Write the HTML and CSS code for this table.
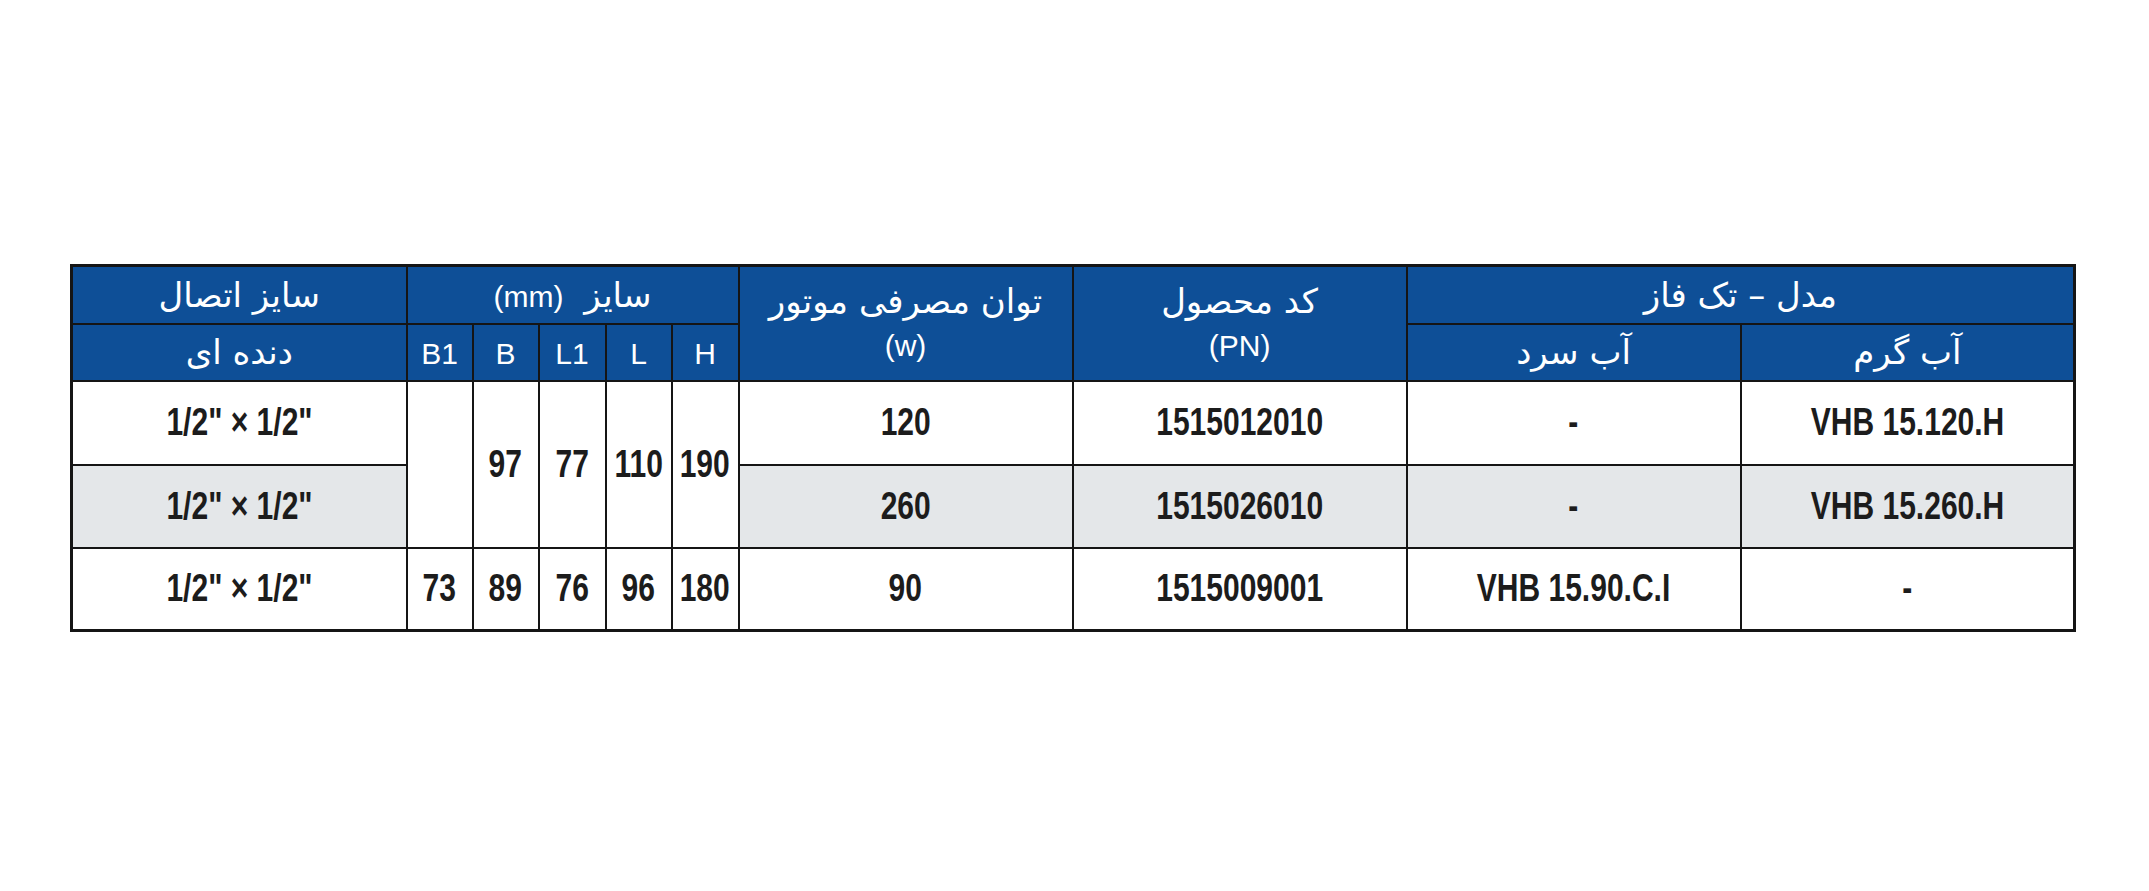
FILE: index.html
```html
<!DOCTYPE html>
<html lang="fa">
<head>
<meta charset="utf-8">
<title>VHB</title>
<link rel="stylesheet" href="styles.css">
</head>
<body>
<main class="page">
<table class="spec" dir="rtl">
  <colgroup>
    <col class="w-wide"><col class="w-wide"><col class="w-wide"><col class="w-wide">
    <col class="w-67"><col class="w-66"><col class="w-67"><col class="w-66"><col class="w-66">
    <col class="w-conn">
  </colgroup>
  <thead>
    <tr class="h1">
      <th colspan="2" class="fa">مدل – تک فاز</th>
      <th rowspan="2" class="fa two"><span class="line">کد محصول</span><span class="line lat">(PN)</span></th>
      <th rowspan="2" class="fa two"><span class="line">توان مصرفی موتور</span><span class="line lat">(w)</span></th>
      <th colspan="5" class="fa">سایز <span class="lat gap">(mm)</span></th>
      <th class="fa">سایز اتصال</th>
    </tr>
    <tr class="h2">
      <th class="fa">آب گرم</th>
      <th class="fa">آب سرد</th>
      <th class="lat">H</th>
      <th class="lat">L</th>
      <th class="lat">L1</th>
      <th class="lat">B</th>
      <th class="lat">B1</th>
      <th class="fa">دنده ای</th>
    </tr>
  </thead>
  <tbody>
    <tr class="r1">
      <td><span class="nx">VHB 15.120.H</span></td>
      <td><span class="nx">-</span></td>
      <td><span class="nx">1515012010</span></td>
      <td><span class="nx">120</span></td>
      <td rowspan="2" class="plain"><span class="nx">190</span></td>
      <td rowspan="2" class="plain"><span class="nx">110</span></td>
      <td rowspan="2" class="plain"><span class="nx">77</span></td>
      <td rowspan="2" class="plain"><span class="nx">97</span></td>
      <td rowspan="2" class="plain"></td>
      <td><span class="nx">1/2" × 1/2"</span></td>
    </tr>
    <tr class="r2 alt">
      <td><span class="nx">VHB 15.260.H</span></td>
      <td><span class="nx">-</span></td>
      <td><span class="nx">1515026010</span></td>
      <td><span class="nx">260</span></td>
      <td><span class="nx">1/2" × 1/2"</span></td>
    </tr>
    <tr class="r3">
      <td><span class="nx">-</span></td>
      <td><span class="nx">VHB 15.90.C.I</span></td>
      <td><span class="nx">1515009001</span></td>
      <td><span class="nx">90</span></td>
      <td><span class="nx">180</span></td>
      <td><span class="nx">96</span></td>
      <td><span class="nx">76</span></td>
      <td><span class="nx">89</span></td>
      <td><span class="nx">73</span></td>
      <td><span class="nx">1/2" × 1/2"</span></td>
    </tr>
  </tbody>
</table>
</main>
</body>
</html>
```

FILE: styles.css
```css
html, body {
  margin: 0;
  padding: 0;
  background: #ffffff;
}

.page {
  padding: 264px 0 0 70px;
}

.spec {
  border-collapse: collapse;
  table-layout: fixed;
  width: 2004px;
  border: 3px solid #151515;
}

.w-wide { width: 334px; }
.w-67 { width: 67px; }
.w-66 { width: 66px; }
.w-conn { width: 335px; }

.spec th,
.spec td {
  border: 2px solid #151515;
  padding: 0;
  text-align: center;
  vertical-align: middle;
  overflow: hidden;
  white-space: nowrap;
}

.spec th {
  background: #0e4f97;
  color: #ffffff;
  font-weight: normal;
}

.h1 { height: 58px; }
.h2 { height: 57px; }

.fa {
  font-family: "DejaVu Sans", sans-serif;
  font-weight: bold;
  font-size: 34px;
  direction: rtl;
}

.lat {
  font-family: "Liberation Sans", Arial, sans-serif;
  font-weight: normal;
  font-size: 30px;
}

.h2 .lat {
  padding-top: 3px;
}

.gap {
  margin-right: 10px;
}

.two .line {
  display: block;
  line-height: 46px;
}

.two .line.lat {
  line-height: 44px;
}

.spec td {
  font-family: "Liberation Sans", Arial, sans-serif;
  font-weight: bold;
  font-size: 38px;
  color: #1c1c1c;
  background: #ffffff;
  direction: ltr;
}

.nx {
  display: inline-block;
  transform: scaleX(0.79);
}

.r1 { height: 84px; }
.r2 { height: 83px; }
.r3 { height: 83px; }

.alt td { background: #e4e7e9; }
.alt td.plain, .spec td.plain { background: #ffffff; }
```
